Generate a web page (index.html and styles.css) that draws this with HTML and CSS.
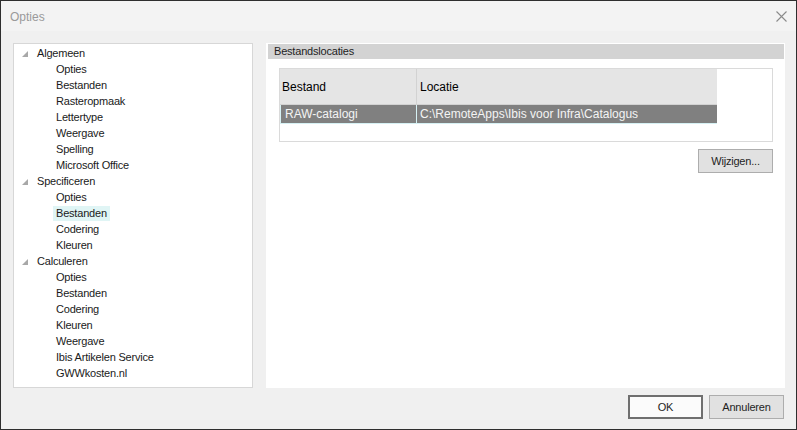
FILE: index.html
```html
<!DOCTYPE html>
<html>
<head>
<meta charset="utf-8">
<link rel="stylesheet" href="styles.css">
</head>
<body>
<div class="window">
  <div class="titlebar">
    <span class="title">Opties</span>
    <svg class="close" width="11" height="11" viewBox="0 0 11 11"><path d="M0.5 0.5 L10.5 10.5 M10.5 0.5 L0.5 10.5" stroke="#8a8a8a" stroke-width="1.1" fill="none"/></svg>
  </div>
  <div class="content">
    <div class="main">
      <div class="tree">
        <div class="row parent"><span class="exp"></span><span class="lbl">Algemeen</span></div>
        <div class="row child"><span class="lbl">Opties</span></div>
        <div class="row child"><span class="lbl">Bestanden</span></div>
        <div class="row child"><span class="lbl">Rasteropmaak</span></div>
        <div class="row child"><span class="lbl">Lettertype</span></div>
        <div class="row child"><span class="lbl">Weergave</span></div>
        <div class="row child"><span class="lbl">Spelling</span></div>
        <div class="row child"><span class="lbl">Microsoft Office</span></div>
        <div class="row parent"><span class="exp"></span><span class="lbl">Specificeren</span></div>
        <div class="row child"><span class="lbl">Opties</span></div>
        <div class="row child"><span class="lbl selected">Bestanden</span></div>
        <div class="row child"><span class="lbl">Codering</span></div>
        <div class="row child"><span class="lbl">Kleuren</span></div>
        <div class="row parent"><span class="exp"></span><span class="lbl">Calculeren</span></div>
        <div class="row child"><span class="lbl">Opties</span></div>
        <div class="row child"><span class="lbl">Bestanden</span></div>
        <div class="row child"><span class="lbl">Codering</span></div>
        <div class="row child"><span class="lbl">Kleuren</span></div>
        <div class="row child"><span class="lbl">Weergave</span></div>
        <div class="row child"><span class="lbl">Ibis Artikelen Service</span></div>
        <div class="row child"><span class="lbl">GWWkosten.nl</span></div>
      </div>
      <div class="panel">
        <div class="panel-head">Bestandslocaties</div>
        <div class="panel-body">
          <div class="table">
            <div class="grid">
              <div class="th th1">Bestand</div>
              <div class="th th2">Locatie</div>
              <div class="td td1">RAW-catalogi</div>
              <div class="td td2">C:\RemoteApps\Ibis voor Infra\Catalogus</div>
            </div>
          </div>
          <div class="actions">
            <button class="btn">Wijzigen...</button>
          </div>
        </div>
      </div>
    </div>
    <div class="footer">
      <button class="btn default">OK</button>
      <button class="btn">Annuleren</button>
    </div>
  </div>
</div>
</body>
</html>
```

FILE: styles.css
```css
* { box-sizing: border-box; }
html, body { margin: 0; padding: 0; background: #f0f0f0; }
body { font-family: "Liberation Sans", Arial, sans-serif; }

.window {
  width: 797px;
  height: 430px;
  border: 1px solid #2e2e2e;
  background: #f0f0f0;
  display: flex;
  flex-direction: column;
}

.titlebar {
  height: 30px;
  flex: none;
  background: #f3f3f3;
  display: flex;
  align-items: center;
  justify-content: space-between;
  padding: 0 9px 0 9px;
}
.title {
  font-size: 12px;
  color: #9a9a9a;
  margin-top: 1px;
}

.content {
  flex: 1;
  display: flex;
  flex-direction: column;
  padding: 12px 11px 0 12px;
}

.main {
  display: flex;
  gap: 13px;
  height: 345px;
}

.tree {
  width: 240px;
  flex: none;
  background: #fff;
  border: 1px solid #d7d7d7;
  padding-top: 1px;
  font-size: 11px;
  letter-spacing: -0.2px;
  color: #1a1a1a;
}
.row {
  height: 16px;
  display: flex;
  align-items: center;
}
.row.parent { padding-left: 8px; }
.row.child { padding-left: 39px; }
.exp {
  width: 0;
  height: 0;
  border-style: solid;
  border-width: 0 0 6px 6px;
  border-color: transparent transparent #a8a8a8 transparent;
  margin-right: 9px;
  margin-top: 2px;
}
.lbl {
  padding: 0 3px 0 3px;
  line-height: 15px;
}
.row.parent .lbl { padding-left: 0; }
.lbl.selected { background: #e0f5f5; }

.panel {
  flex: 1;
  background: #fff;
  padding: 1px;
  display: flex;
  flex-direction: column;
}
.panel-head {
  height: 15px;
  background: #d3d3d3;
  font-size: 11px;
  letter-spacing: -0.2px;
  color: #1e1e1e;
  padding-left: 6px;
  line-height: 15px;
  margin-left: 1px;
}
.panel-body {
  padding: 9px 11px 0 12px;
  display: flex;
  flex-direction: column;
}

.table {
  height: 74px;
  border: 1px solid #dadada;
  background: #fff;
}
.grid {
  display: grid;
  grid-template-columns: 137px 300px;
  grid-template-rows: 36px 19px;
  width: 437px;
  font-size: 12px;
}
.th {
  background: #e5e5e5;
  color: #000;
  display: flex;
  align-items: center;
  border-bottom: 1px solid #d2d2d2;
  padding-top: 1px;
}
.th1 { padding-left: 2px; border-right: 1px solid #d2d2d2; }
.th2 { padding-left: 3px; }
.td {
  background: #808080;
  color: #f4f4f4;
  display: flex;
  align-items: center;
  border-bottom: 1px solid #d6f1f4;
}
.td1 { padding-left: 4px; border-left: 1px solid #d6f1f4; border-right: 1px solid #d6f1f4; }
.td2 { padding-left: 3px; }

.actions {
  display: flex;
  justify-content: flex-end;
  padding-top: 7px;
}

.btn {
  font-family: "Liberation Sans", Arial, sans-serif;
  font-size: 11px;
  letter-spacing: -0.2px;
  color: #1e1e1e;
  background: #e1e1e1;
  border: 1px solid #adadad;
  width: 75px;
  height: 24px;
  padding: 0;
  margin: 0;
}
.btn.default {
  background: #fbfbfb;
  border: 2px solid #6f6f6f;
}

.footer {
  display: flex;
  justify-content: flex-end;
  gap: 6px;
  padding-top: 7px;
  padding-right: 1px;
}
```
